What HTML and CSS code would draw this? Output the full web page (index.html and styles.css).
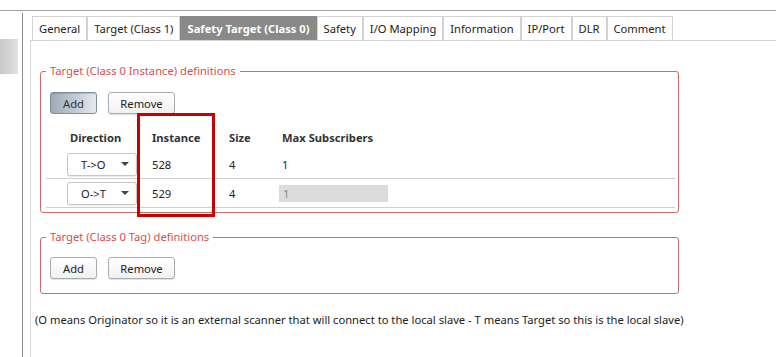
FILE: index.html
```html
<!DOCTYPE html>
<html lang="en">
<head>
  <meta charset="UTF-8">
  <title>Safety Target (Class 0)</title>
  <link rel="stylesheet" href="styles.css">
</head>
<body>
  <div class="window">
    <aside class="sidebar">
      <div class="side-item"></div>
    </aside>

    <main class="main">
      <nav class="tabs">
        <div class="tab">General</div>
        <div class="tab">Target (Class 1)</div>
        <div class="tab active">Safety Target (Class 0)</div>
        <div class="tab">Safety</div>
        <div class="tab">I/O Mapping</div>
        <div class="tab">Information</div>
        <div class="tab">IP/Port</div>
        <div class="tab">DLR</div>
        <div class="tab">Comment</div>
      </nav>

      <section class="panel">
        <fieldset class="group">
          <legend>Target (Class 0 Instance) definitions</legend>
          <div class="btn-row">
            <button class="btn btn-add pressed">Add</button>
            <button class="btn btn-remove">Remove</button>
          </div>

          <div class="grid">
            <div class="grid-row head">
              <div class="cell dir-head">Direction</div>
              <div class="cell">Instance</div>
              <div class="cell">Size</div>
              <div class="cell">Max Subscribers</div>
            </div>
            <div class="grid-row">
              <div class="cell"><div class="combo"><span>T-&gt;O</span><i class="caret"></i></div></div>
              <div class="cell">528</div>
              <div class="cell">4</div>
              <div class="cell">1</div>
            </div>
            <div class="grid-row">
              <div class="cell"><div class="combo"><span>O-&gt;T</span><i class="caret"></i></div></div>
              <div class="cell">529</div>
              <div class="cell">4</div>
              <div class="cell"><div class="ro-input">1</div></div>
            </div>
            <!-- red marker round the Instance column -->
            <div class="highlight"></div>
          </div>
        </fieldset>

        <fieldset class="group tag-group">
          <legend>Target (Class 0 Tag) definitions</legend>
          <div class="btn-row">
            <button class="btn btn-add">Add</button>
            <button class="btn btn-remove">Remove</button>
          </div>
        </fieldset>

        <p class="note">(O means Originator so it is an external scanner that will connect to the local slave - T means Target so this is the local slave)</p>
      </section>
    </main>
  </div>
</body>
</html>
```

FILE: styles.css
```css
body { margin:0; width:776px; height:357px; overflow:hidden; background:#fff; font-family:"Noto Sans", Arial, sans-serif; font-size:11.2px; color:#222; }
.window { margin-top:10px; border-top:1px solid #a3a3a3; display:flex; height:346px; }

.sidebar { width:22px; margin-top:2px; border-right:1px solid #8a8a8a; }
.side-item { margin-top:26px; width:18px; height:35px; background:linear-gradient(to right, #c9c9c9, #d6d6d6 60%, #e2e2e2); }

.main { flex:1; padding-left:7px; display:flex; flex-direction:column; }
.tabs { display:flex; margin:5px 0 0 2px; height:24px; }
.tab { border:1px solid #d2d2d2; border-bottom:none; padding:0 6px; line-height:23px; white-space:nowrap; color:#222; }
.tab.active { background:#898989; border-color:#898989; color:#fff; font-weight:bold; }

.panel { flex:1; border-top:1px solid #d4d4d4; border-left:1px solid #d4d4d4; padding-top:22px; }

.group { margin:0 0 0 9px; width:639px; box-sizing:border-box; padding:0 3px 4px 5px; border:1px solid #cf6b6b; border-radius:3px; }
.group legend { padding:0 4px; line-height:16px; color:#d2504d; }
.tag-group { margin-top:16px; padding-bottom:14px; }

.btn-row { display:flex; gap:11px; margin-top:13px; padding-left:4px; }
.tag-group .btn-row { margin-top:12px; }
.btn { height:22px; padding:0; font-family:inherit; font-size:11.2px; color:#222; border:1px solid #ababab; border-radius:3px; background:linear-gradient(#ffffff, #f1f1f1); box-shadow:0 1px 1px rgba(0,0,0,0.12); }
.btn-add { width:47px; }
.btn-remove { width:67px; }
.btn.pressed { border-color:#7f8d9b; color:#333; background:linear-gradient(to right, #9fabb8, #c3cbd4 55%, #e8ebef); box-shadow:inset 0 1px 1px rgba(0,0,0,0.15); }

.grid { position:relative; margin-top:11px; }
.grid-row { display:grid; grid-template-columns:85px 77px 53px 1fr; height:28px; align-items:center; border-bottom:1px solid #cfcfcf; padding-left:21px; }
.grid-row.head { height:25px; border-bottom:none; font-weight:bold; color:#333; }
.dir-head { padding-left:3px; }

.combo { width:70px; height:23px; box-sizing:border-box; border:1px solid #c6c6c6; border-radius:3px; background:#fff; box-shadow:0 1px 1px rgba(0,0,0,0.08); display:flex; align-items:center; padding:0 7px 0 13px; }
.combo span { flex:1; }
.caret { width:0; height:0; border-left:4px solid transparent; border-right:4px solid transparent; border-top:4px solid #444; }

.ro-input { width:109px; height:17px; line-height:17px; background:#dcdcdc; color:#888; padding-left:4px; margin-left:-3px; box-sizing:border-box; }

.highlight { position:absolute; left:91px; top:-12px; width:78px; height:104px; box-sizing:border-box; border:3px solid #c80000; }

.note { margin:18px 0 0 4px; line-height:16px; white-space:nowrap; }
```
